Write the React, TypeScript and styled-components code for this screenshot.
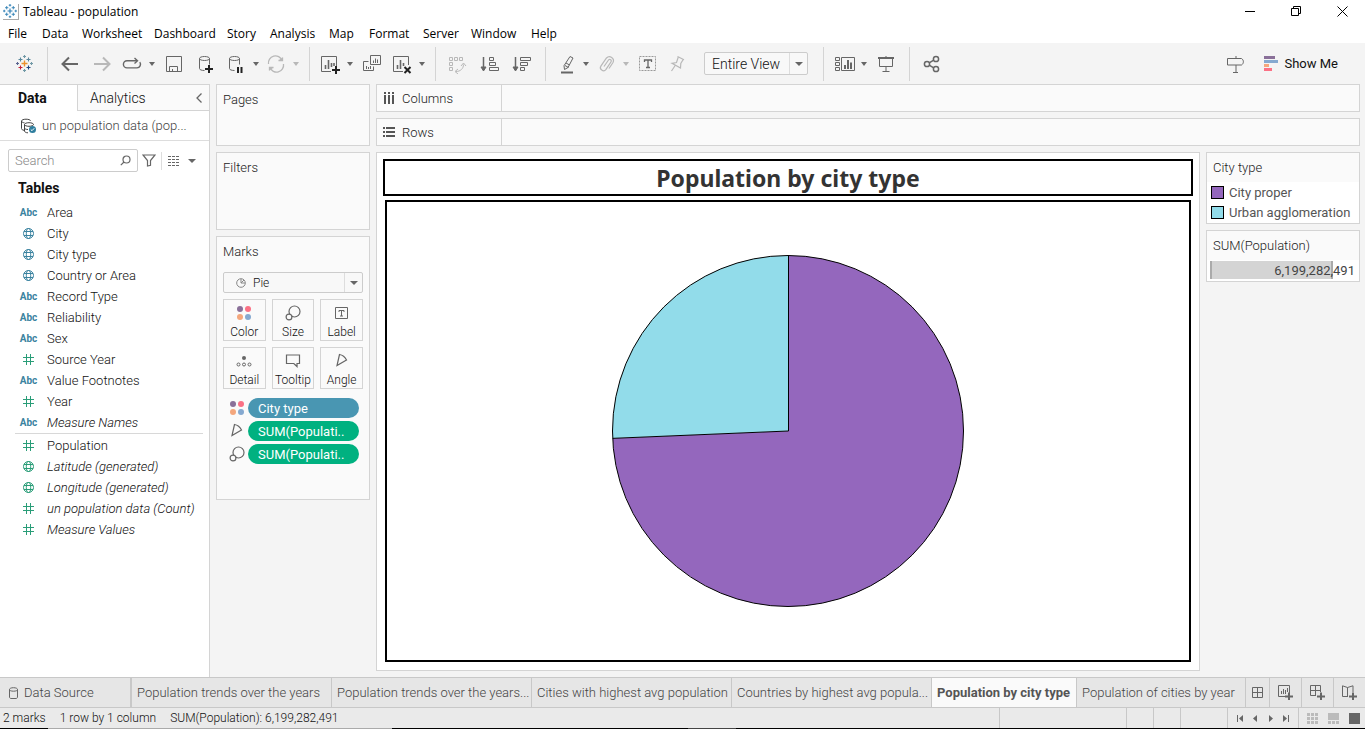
import React from "react";
import styled, { createGlobalStyle, css } from "styled-components";

const UI = `Roboto, "Liberation Sans", sans-serif`;
const SYSTEM = `"Open Sans", "Noto Sans", sans-serif`;

const line = "#d4d4d4";
const iconGrey = "#666";
const faded = "#b8b8b8";

const GlobalStyle = createGlobalStyle`
  *, *::before, *::after { box-sizing: border-box; }
  body { margin: 0; background: #f4f4f4; font-family: ${UI}; font-size: 13px; font-weight: 300; color: #111; }
  button, input, select { font: inherit; color: inherit; margin: 0; }
  button { background: none; border: 0; padding: 0; cursor: pointer; }
  h1, h2, ul, ol { margin: 0; padding: 0; font-size: inherit; font-weight: inherit; }
  ul, ol { list-style: none; }
  svg { display: block; flex: none; }
`;

/* ---------- page frame ---------- */

const Window = styled.div`
  display: flex;
  flex-direction: column;
  min-height: 100vh;
`;

const TitleBar = styled.header`
  display: flex;
  align-items: center;
  gap: 4px;
  height: 23px;
  padding-left: 3px;
  background: #fff;
  color: #000;
  font-family: ${SYSTEM};
  font-size: 12px;
  font-weight: 400;
`;

const AppBadge = styled.span`
  display: flex;
  padding: 0 1px 1px 0;
  border-right: 1px solid #aaa;
  border-bottom: 1px solid #aaa;
`;

const WindowButtons = styled.div`
  display: flex;
  margin-left: auto;
`;

const WindowButton = styled.button`
  display: flex;
  align-items: center;
  justify-content: center;
  width: 46px;
  height: 22px;
`;

const MenuBar = styled.nav`
  display: grid;
  grid-template-columns: 34px 40px 72px 73px 43px 59px 40px 54px 48px 60px 40px;
  height: 20px;
  padding-left: 8px;
  background: #fff;
  color: #000;
  font-family: ${SYSTEM};
  font-size: 12px;
  font-weight: 400;
`;

const MenuItem = styled.button`
  line-height: 22px;
  text-align: left;
`;

const Toolbar = styled.div`
  display: flex;
  align-items: center;
  height: 41px;
  padding: 0 27px 0 8px;
`;

const ToolButton = styled.button<{ $split?: boolean; $faded?: boolean }>`
  display: flex;
  align-items: center;
  justify-content: center;
  width: ${(p) => (p.$split ? 28 : 32)}px;
  height: 32px;
  color: ${(p) => (p.$faded ? faded : iconGrey)};
`;

const CaretButton = styled.button<{ $faded?: boolean }>`
  display: flex;
  align-items: center;
  justify-content: center;
  width: 12px;
  height: 32px;
  color: ${(p) => (p.$faded ? faded : iconGrey)};
`;

const ToolDivider = styled.span`
  width: 2px;
  height: 34px;
  margin: 0 6px;
  border-right: 1px solid ${line};
`;

const SelectFrame = styled.div<{ $wide?: boolean }>`
  position: relative;
  display: flex;
  align-items: center;
  border: 1px solid #ccc;
  border-radius: 2px;
  background: #f8f8f8;
  ${(p) =>
    p.$wide
      ? css`
          height: 21px;
          margin-bottom: 6px;
        `
      : css`
          width: 104px;
          height: 23px;
          margin: 0 8px;
          font-size: 14px;
        `}
`;

const SelectBox = styled.select<{ $indent: number }>`
  appearance: none;
  width: 100%;
  height: 100%;
  padding: 0 20px 0 ${(p) => p.$indent}px;
  border: 0;
  background: none;
  outline: 0;
`;

const SelectArrow = styled.span`
  position: absolute;
  right: 0;
  top: 0;
  bottom: 0;
  width: 18px;
  display: flex;
  align-items: center;
  justify-content: center;
  border-left: 1px solid #ddd;
  color: ${iconGrey};
  pointer-events: none;
`;

const SelectIcon = styled.span`
  position: absolute;
  left: 12px;
  pointer-events: none;
`;

const ToolbarEnd = styled.div`
  display: flex;
  align-items: center;
  gap: 12px;
  margin-left: auto;
`;

const ShowMe = styled.button`
  display: flex;
  align-items: center;
  gap: 5px;
  font-size: 13px;
  font-weight: 400;
`;

const Workspace = styled.div`
  flex: 1;
  display: grid;
  grid-template-columns: 210px 154px minmax(0, 1fr);
  column-gap: 6px;
  padding-right: 5px;
`;

/* ---------- data pane ---------- */

const DataPane = styled.aside`
  background: #fff;
  border: solid ${line};
  border-width: 1px 1px 0 0;
`;

const PaneTabs = styled.div`
  display: flex;
  height: 26px;
  font-size: 14px;
`;

const PaneTab = styled.button<{ $active?: boolean }>`
  text-align: left;
  ${(p) =>
    p.$active
      ? css`
          width: 77px;
          padding-left: 18px;
          font-weight: 700;
          color: #111;
        `
      : css`
          flex: 1;
          padding-left: 12px;
          background: #fafafa;
          border: solid ${line};
          border-width: 0 0 1px 1px;
        `}
`;

const CollapseButton = styled.button`
  display: flex;
  align-items: center;
  justify-content: center;
  width: 20px;
  background: #fafafa;
  border-bottom: 1px solid ${line};
  color: ${iconGrey};
`;

const DataSourceRow = styled.button`
  display: flex;
  align-items: center;
  gap: 5px;
  width: 100%;
  height: 30px;
  padding-left: 20px;
  border-bottom: 1px solid #ddd;
  color: #444;
`;

const SearchRow = styled.div`
  display: flex;
  align-items: center;
  gap: 4px;
  padding: 8px 11px 0 8px;
  color: ${iconGrey};
`;

const SearchBox = styled.label`
  display: flex;
  align-items: center;
  width: 130px;
  height: 23px;
  padding: 0 6px;
  border: 1px solid #ccc;
  border-radius: 2px;
`;

const SearchInput = styled.input`
  flex: 1;
  min-width: 0;
  padding: 0;
  border: 0;
  outline: 0;
  &::placeholder { color: #888; opacity: 1; }
`;

const PlainButton = styled.button`
  display: flex;
  align-items: center;
  gap: 8px;
  color: inherit;
`;

const SearchDivider = styled.span`
  height: 18px;
  margin: 0 2px 0 1px;
  border-left: 1px solid #ddd;
`;

const TablesTitle = styled.h2`
  padding: 6px 18px 4px;
  font-size: 14px;
  line-height: 20px;
  font-weight: 700;
  color: #111;
`;

const FieldList = styled.ul`
  margin: 0 6px 0 15px;
  & + & { padding-top: 1px; border-top: 1px solid #d8d8d8; }
`;

const FieldButton = styled.button<{ $italic?: boolean }>`
  display: flex;
  align-items: center;
  gap: 5px;
  width: 100%;
  height: 21px;
  font-style: ${(p) => (p.$italic ? "italic" : "normal")};
  white-space: nowrap;
`;

const FieldIcon = styled.span<{ $tone: string }>`
  display: flex;
  justify-content: center;
  width: 27px;
  font-size: 10px;
  font-weight: 700;
  font-style: normal;
  color: ${(p) => p.$tone};
`;

/* ---------- shelves and cards ---------- */

const CardColumn = styled.div`
  display: flex;
  flex-direction: column;
  gap: 6px;
`;

const Card = styled.section<{ $height: number }>`
  height: ${(p) => p.$height}px;
  padding: 5px 6px;
  border: 1px solid ${line};
  background: #fafafa;
`;

const CardTitle = styled.h2`
  line-height: 20px;
  color: #222;
`;

const MarksBody = styled.div`
  padding-top: 10px;
  font-size: 12px;
`;

const MarkGrid = styled.div`
  display: grid;
  grid-template-columns: repeat(3, 1fr);
  gap: 6px;
`;

const MarkButton = styled.button`
  display: flex;
  flex-direction: column;
  align-items: center;
  justify-content: space-between;
  height: 42px;
  padding-top: 5px;
  border: 1px solid ${line};
  line-height: 15px;
  svg { color: ${iconGrey}; }
`;

const PillList = styled.ul`
  display: grid;
  gap: 3px;
  padding: 9px 4px 0 5px;
  color: ${iconGrey};
`;

const PillRow = styled.li`
  display: flex;
  align-items: center;
  gap: 3px;
`;

const PillIcon = styled.span`
  display: flex;
  justify-content: center;
  width: 17px;
`;

const Pill = styled.button<{ $measure?: boolean }>`
  flex: 1;
  height: 20px;
  padding-left: 10px;
  border-radius: 10px;
  background: ${(p) => (p.$measure ? "#00b180" : "#4996b2")};
  color: #fff;
  font-weight: 400;
  font-size: 13px;
  text-align: left;
`;

const MainColumn = styled.main`
  display: flex;
  flex-direction: column;
  gap: 6px;
  padding-bottom: 6px;
`;

const Shelf = styled.div`
  display: flex;
  height: 28px;
  border: 1px solid ${line};
  background: #fafafa;
`;

const ShelfLabel = styled.div`
  display: flex;
  align-items: center;
  gap: 7px;
  width: 125px;
  padding-left: 6px;
  border-right: 1px solid ${line};
  color: #222;
  svg { color: #555; }
`;

const ViewRow = styled.div`
  flex: 1;
  display: grid;
  grid-template-columns: minmax(0, 1fr) 154px;
  gap: 6px;
`;

const View = styled.section`
  display: flex;
  flex-direction: column;
  padding: 6px;
  border: 1px solid ${line};
  background: #fff;
`;

const ViewTitle = styled.h1`
  height: 37px;
  border: 2px solid #000;
  font-family: "Noto Sans", "Open Sans", sans-serif;
  font-size: 23px;
  line-height: 34px;
  font-weight: 700;
  text-align: center;
  color: #333;
`;

const ChartFrame = styled.div`
  flex: 1;
  display: flex;
  align-items: center;
  justify-content: center;
  margin: 4px 2px 2px;
  border: 2px solid #000;
`;

const Legend = styled.section`
  border: 1px solid ${line};
  background: #fff;
`;

const LegendTitle = styled.h2`
  padding: 5px 6px 4px;
  line-height: 20px;
  background: #fafafa;
  color: #222;
`;

const LegendList = styled.ul`
  padding-bottom: 1px;
  font-weight: 400;
`;

const LegendItem = styled.li`
  display: flex;
  align-items: center;
  gap: 5px;
  height: 20px;
  padding-left: 4px;
  color: #555;
`;

const Swatch = styled.span<{ $color: string }>`
  width: 13px;
  height: 13px;
  border: 1px solid #000;
  background: ${(p) => p.$color};
`;

const SizeScale = styled.div`
  display: flex;
  align-items: center;
  justify-content: flex-end;
  height: 18px;
  margin: 1px 3px 2px;
  padding-right: 1px;
  background: linear-gradient(to right, #aaa 2px, #d4d4d4 2px 121px, #aaa 121px 123px, transparent 123px);
  color: #444;
  font-weight: 400;
`;

/* ---------- sheet tabs and status bar ---------- */

const SheetBar = styled.nav`
  display: flex;
  height: 31px;
  border: solid #c8c8c8;
  border-width: 1px 0;
  background: #e6e6e6;
  color: #444;
`;

const SheetTab = styled.button<{ $width: number; $active?: boolean; $thick?: boolean }>`
  display: flex;
  flex: none;
  align-items: center;
  gap: 6px;
  width: ${(p) => p.$width}px;
  padding-left: ${(p) => (p.$thick ? 9 : 5)}px;
  border-right: ${(p) => (p.$thick ? 2 : 1)}px solid #c8c8c8;
  white-space: nowrap;
  svg { color: ${iconGrey}; }
  ${(p) =>
    p.$active &&
    css`
      background: #fafafa;
      font-weight: 700;
      color: #555;
    `}
`;

const SheetAction = styled.button<{ $narrow?: boolean }>`
  display: flex;
  flex: none;
  align-items: center;
  justify-content: center;
  width: ${(p) => (p.$narrow ? 24 : 32)}px;
  border-right: 1px solid #c8c8c8;
  color: ${iconGrey};
  &:last-child { flex: 1; border-right: 0; }
`;

const StatusBar = styled.footer`
  display: flex;
  height: 20px;
  background: #eaeaea;
  font-size: 12px;
`;

const StatusTexts = styled.div`
  display: flex;
  align-items: center;
  gap: 14px;
  flex: 1;
  padding-left: 3px;
`;

const StatusCell = styled.div<{ $width: number }>`
  display: flex;
  align-items: center;
  justify-content: space-evenly;
  width: ${(p) => p.$width}px;
  border-left: 1px solid #c8c8c8;
  color: ${iconGrey};
`;

const ViewModes = styled.div`
  display: flex;
  align-items: center;
  gap: 10px;
  padding: 0 5px 0 8px;
  border-left: 1px solid #c8c8c8;
`;

const ScreenEdge = styled.div`
  height: 1px;
  background: linear-gradient(to right, #000 48px, #aaa 48px 392px, #000 392px 688px, #444 688px 736px, #000 736px);
`;

/* ---------- icons ---------- */

type Kids = { children: React.ReactNode };

const Icon = ({ w = 20, h = 20, sw = 1, children }: Kids & { w?: number; h?: number; sw?: number }) => (
  <svg width={w} height={h} viewBox={`0 0 ${w} ${h}`} fill="none" stroke="currentColor" strokeWidth={sw} aria-hidden="true">
    {children}
  </svg>
);

const cross = (x: number, y: number, r: number) => `M${x - r} ${y}h${2 * r}M${x} ${y - r}v${2 * r}`;

const Mark = ({ size, colors }: { size: number; colors: string[] }) => {
  const spots: [number, number, number][] = [
    [8.5, 8.5, 3], [4.5, 4.5, 2], [12.5, 4.5, 2], [4.5, 12.5, 2], [12.5, 12.5, 2],
    [8.5, 1.5, 1.5], [8.5, 15.5, 1.5], [1.5, 8.5, 1.5], [15.5, 8.5, 1.5],
  ];
  return (
    <svg width={size} height={size} viewBox="0 0 17 17" aria-hidden="true">
      {spots.map(([x, y, r], i) => (
        <path key={i} d={cross(x, y, r)} stroke={colors[i % colors.length]} strokeWidth={i < 1 ? 1.4 : 1.1} />
      ))}
    </svg>
  );
};

const Caret = () => (
  <svg width="6" height="4" viewBox="0 0 6 4" fill="currentColor" aria-hidden="true"><path d="M0 0h6L3 4z" /></svg>
);
const WideCaret = () => (
  <svg width="8" height="4" viewBox="0 0 8 4" fill="currentColor" aria-hidden="true"><path d="M0 0h8L4 4z" /></svg>
);

const BackIcon = () => <Icon sw={2}><path d="M2.500 10H18M9 3.500L2.500 10L9 16.500" /></Icon>;
const ForwardIcon = () => <Icon sw={2}><path d="M2 10H17.500M11 3.500L17.500 10L11 16.500" /></Icon>;
const RedoIcon = () => (
  <Icon sw={1.4}><path d="M15 6.700H5a3.600 3.600 0 0 0 0 7.200h10a3.600 3.600 0 0 0 2.800-5.700" /><path d="M12.500 4l3 2.700-3 2.700" /></Icon>
);
const SaveIcon = () => <Icon><path d="M2.500 2.500h15v15h-15zM5.500 17.500v-5h8v5M8.500 17v-2" /></Icon>;
const Cylinder = () => (
  <path d="M3.500 4.500c0-1.100 2-2 5-2s5 .9 5 2-2 2-5 2-5-.9-5-2zV14.500c0 1.200 2 2 5 2M13.500 4.500v6" />
);
const AddDataIcon = () => (
  <Icon><Cylinder /><path d="M9 15h8M13 11v8" stroke="#222" strokeWidth="2" /></Icon>
);
const PauseDataIcon = () => (
  <Icon><Cylinder /><path d="M12 13v6M15.500 13v6" stroke="#222" strokeWidth="2" /></Icon>
);
const RefreshIcon = () => (
  <Icon sw={1.3}>
    <path d="M2.500 10a7 7 0 0 1 13.500-3.500M17.500 10a7 7 0 0 1-13.500 3.500" />
    <path d="M12.500 6.500h4v-3M7.500 13.500h-4v3" fill="currentColor" />
  </Icon>
);
const NewSheetIcon = () => (
  <Icon><path d="M11 17.500H1.500v-15h15V12" /><path d="M5.500 15v-4M8.500 15V6M11.500 13V9M14 12v-3" strokeWidth="1.600" /><path d="M12 16h8M16 12v8" stroke="#222" strokeWidth="2" /></Icon>
);
const DuplicateIcon = () => (
  <Icon><path d="M8.500 1.500h10v9h-10zM6.500 7.500h-5v9h10v-4" /><path d="M11.500 9V6.500M13.500 9V4.500M15.500 9V5.500M4.500 15v-3M6.500 15v-2M8.500 15v-3" /></Icon>
);
const ClearIcon = () => (
  <Icon><path d="M11 17.500H1.500v-15h15V11" /><path d="M5.500 15v-4M8.500 15V6M11.500 12V9" strokeWidth="1.600" /><path d="M12.500 13l6 6M18.500 13l-6 6" stroke="#222" strokeWidth="2" /></Icon>
);
const SwapIcon = () => (
  <Icon>
    <path d="M1.500 3.500h3v3h-3zM6.500 3.500h3v3h-3zM11.500 3.500h3v3h-3zM1.500 8.500h3v3h-3zM1.500 13.500h3v3h-3z" />
    <path d="M8 17.500c4.500 0 7.500-3 7.500-7M13 12l2.500-3L18 12M10 15l-3 2.500L10 20" />
  </Icon>
);
const SortAscIcon = () => (
  <Icon><path d="M3.500 3v13" strokeWidth="1.500" /><path d="M1 13h5l-2.500 4z" fill="currentColor" /><path d="M9.500 3.500h4v3h-4zM9.500 8.500h6v3h-6zM9.500 13.500h9v3h-9z" /></Icon>
);
const SortDescIcon = () => (
  <Icon><path d="M3.500 3v13" strokeWidth="1.500" /><path d="M1 13h5l-2.500 4z" fill="currentColor" /><path d="M8.500 3.500h10v3h-10zM8.500 8.500h7v3h-7zM8.500 13.500h4v3h-4z" /></Icon>
);
const HighlightIcon = () => (
  <Icon w={18}><path d="M13 2.500l3 1.500-5 9.500-3.500 2-.5-3.800zM8 11.500l3.500 2M9 9l3.200 1.800" /><path d="M4 18.500h12" strokeWidth="2" /></Icon>
);
const ClipIcon = () => (
  <Icon sw={1.200}><path d="M8 12.500l4.500-6.500a1.500 1.500 0 0 1 2.500 1.800l-5 7.500a3 3 0 0 1-5-3.500l5.500-7.800a4 4 0 0 1 6.500 4.500L13 14.500" /></Icon>
);
const LabelIcon = () => (
  <Icon><rect x="1.500" y="2.500" width="16" height="14" strokeDasharray="2 1" stroke="#999" /><path d="M6.500 8V6h7v2M10 6v7.500M8 13.500h4" strokeWidth="1.300" /></Icon>
);
const PinIcon = () => (
  <Icon sw={1.200}><path d="M7.500 2.500l6.500 3.200M8.300 3l-1.800 5.500-4.500.8 8.500 4.800.3-4.700L13.200 5.500M5.200 11.500L1.500 17" /></Icon>
);
const CardsIcon = () => (
  <Icon w={24}><path d="M3.500 3.500h4v3h-4zM3.500 8.500h4v3h-4zM3.500 13.500h4v3h-4zM9.500 3.500h13v13h-13z" /><path d="M13 15v-4M16 15V6M19 15V8.500" strokeWidth="2" /></Icon>
);
const PresentIcon = () => (
  <Icon><path d="M2 4h16" strokeWidth="2" /><path d="M3.500 5v7.500h13V5M10 2v2M10 12.500v5M6.500 17.500h7" /></Icon>
);
const ShareIcon = () => (
  <Icon sw={1.500}><circle cx="5" cy="10" r="2.600" /><circle cx="14" cy="5" r="2.600" /><circle cx="14" cy="15" r="2.600" /><path d="M7.200 8.800l4.500-2.600M7.200 11.200l4.500 2.600" /></Icon>
);
const SignIcon = () => <Icon><path d="M1.500 4.500h14c2.500 1.500 2.500 5 0 6.500h-14zM10 2v2.500M10 11v7.500M7 18.500h5" /></Icon>;

const GlobeIcon = () => (
  <Icon w={11} h={11}><circle cx="5.500" cy="5.500" r="5" /><ellipse cx="5.500" cy="5.500" rx="2.200" ry="5" /><path d="M1 3.500h9M1 7.500h9" /></Icon>
);
const HashIcon = () => <Icon w={11} h={11}><path d="M3.500 0v11M7.500 0v11M0 3.500h11M0 7.500h11" /></Icon>;

const DatabaseIcon = () => (
  <Icon w={17} h={16}>
    <path d="M1.500 3c0-1 2-1.800 4.500-1.800s4.500.7 4.500 1.600M1.500 3v7.500c0 1 1 1.600 2.500 1.800M1.500 3c0 1 1.500 1.700 3 1.800M4.500 6.500c0-1 2-1.800 4.500-1.800s4.500.8 4.500 1.800-2 1.800-4.500 1.800S4.500 7.500 4.500 6.500zV13c0 1 1.500 1.800 3.500 1.800M4.500 10c0 .8 1.500 1.500 3.500 1.500" />
    <circle cx="12.500" cy="11.500" r="3.500" fill="#2e7e9e" stroke="none" />
    <path d="M10.800 11.500l1.200 1.200 2.200-2.400" stroke="#fff" />
  </Icon>
);
const MagnifierIcon = () => <Icon w={11} h={11} sw={1.200}><circle cx="6.500" cy="4.500" r="3.500" /><path d="M4 7L.8 10.200" /></Icon>;
const FunnelIcon = () => <Icon w={14} h={13} sw={1.200}><path d="M1 1h12L8.500 6.500v4.800L5.500 12V6.500z" /></Icon>;
const ListIcon = () => <Icon w={12} h={10}><path d="M0 .5h12M0 3.500h12M0 6.500h12M0 9.500h12" strokeDasharray="3 1" /></Icon>;

const DotsIcon = () => (
  <svg width="16" height="16" viewBox="0 0 16 16" aria-hidden="true">
    <circle cx="4" cy="4" r="3" fill="#8a7099" /><circle cx="12" cy="4" r="3" fill="#fb7185" />
    <circle cx="4" cy="12" r="3" fill="#f4a77d" /><circle cx="12" cy="12" r="3" fill="#85a9d0" />
  </svg>
);
const SizeIcon = () => <Icon w={16} h={16} sw={1.200}><circle cx="9.500" cy="6.500" r="5.500" /><circle cx="4" cy="12" r="2.900" fill="#fafafa" /></Icon>;
const TextIcon = () => <Icon w={14} h={16}><path d="M.5 2.500h12v11H.5z" /><path d="M4 7V5.500h5V7M6.500 5.500v5.500M5 11h3" /></Icon>;
const DetailIcon = () => (
  <Icon w={16} h={16}><circle cx="8" cy="5" r="2" fill="currentColor" stroke="none" /><circle cx="2.500" cy="11.500" r="1.500" /><circle cx="8" cy="11.500" r="1.500" /><circle cx="13.500" cy="11.500" r="1.500" /></Icon>
);
const TooltipIcon = () => <Icon w={16} h={16} sw={1.200}><path d="M1.500 2h13v8.500h-2.500v3L8.800 10.500H1.500z" /></Icon>;
const AngleIcon = () => <Icon w={14} h={16} sw={1.200}><path d="M4.500 1.500L2 12.500 11.500 7C10 4 7.500 2 4.500 1.500z" /></Icon>;
const PieIcon = () => <Icon w={10} h={10}><circle cx="5" cy="5" r="4.300" stroke="#888" /><path d="M5 1v4h4M5 5l3-3" stroke="#888" /></Icon>;

const ColumnsIcon = () => <Icon w={12} h={12} sw={2}><path d="M2 0v2M6 0v2M10 0v2M2 3v9M6 3v9M10 3v9" /></Icon>;
const RowsIcon = () => <Icon w={12} h={12} sw={2}><path d="M0 2h2M0 6h2M0 10h2M3 2h9M3 6h9M3 10h9" /></Icon>;

const TabDataIcon = () => <Icon w={9} h={12}><path d="M.5 2.500c0-1 1.500-1.800 4-1.800s4 .8 4 1.800-1.500 1.700-4 1.700-4-.7-4-1.700zV10c0 .8.6 1.500 1.500 1.500h5c.9 0 1.500-.7 1.500-1.500V2.500" /></Icon>;
const GridIcon = () => <Icon w={11} h={11}><path d="M.5.5h10v10H.5zM5.500 0v11M0 5.500h11" /></Icon>;
const AddSheetIcon = () => (
  <Icon w={16} h={15}><path d="M8 11.500H.5V.5h11V8M3.500 9V6M5.500 9V4M7.500 9V5M9.500 7V3" /><path d="M7 11.500h8M11 7.500v8" strokeWidth="2" /></Icon>
);
const AddDashboardIcon = () => (
  <Icon w={16} h={15}><path d="M6 10.500H.5V.5h10V7M5.500 0v11M0 5.500h11" /><path d="M7 11.500h8M11 7.500v8" strokeWidth="2" /></Icon>
);
const AddStoryIcon = () => (
  <Icon w={16} h={15}><path d="M6 11.500H.5V.8l5 1.700 5.500-1.700V7M5.500 2.500v9" /><path d="M7 11.500h8M11 7.500v8" strokeWidth="2" /></Icon>
);

const NavIcon = ({ d, bar }: { d: string; bar?: number }) => (
  <svg width="8" height="7" viewBox="0 0 8 7" fill="currentColor" aria-hidden="true">
    <path d={d} />
    {bar !== undefined && <rect x={bar} y="0" width="1" height="7" />}
  </svg>
);

const thumbs = [0, 4, 8];
const SorterIcon = () => (
  <svg width="11" height="11" fill="#bbb" aria-hidden="true">
    {thumbs.flatMap((y) => thumbs.map((x) => <rect key={`${x}-${y}`} x={x} y={y} width="3" height="3" />))}
  </svg>
);
const FilmstripIcon = () => (
  <svg width="11" height="11" fill="#bbb" aria-hidden="true">
    <rect width="11" height="7" />
    {thumbs.map((x) => <rect key={x} x={x} y="8" width="3" height="3" />)}
  </svg>
);

/* ---------- data ---------- */

const menus = ["File", "Data", "Worksheet", "Dashboard", "Story", "Analysis", "Map", "Format", "Server", "Window", "Help"];

type Kind = "text" | "geo" | "number";
type Field = { name: string; kind: Kind; measure?: boolean; generated?: boolean };

const dimensions: Field[] = [
  { name: "Area", kind: "text" },
  { name: "City", kind: "geo" },
  { name: "City type", kind: "geo" },
  { name: "Country or Area", kind: "geo" },
  { name: "Record Type", kind: "text" },
  { name: "Reliability", kind: "text" },
  { name: "Sex", kind: "text" },
  { name: "Source Year", kind: "number", measure: true },
  { name: "Value Footnotes", kind: "text" },
  { name: "Year", kind: "number", measure: true },
  { name: "Measure Names", kind: "text", generated: true },
];

const measures: Field[] = [
  { name: "Population", kind: "number", measure: true },
  { name: "Latitude (generated)", kind: "geo", measure: true, generated: true },
  { name: "Longitude (generated)", kind: "geo", measure: true, generated: true },
  { name: "un population data (Count)", kind: "number", measure: true, generated: true },
  { name: "Measure Values", kind: "number", measure: true, generated: true },
];

const marks = [
  { name: "Color", icon: <DotsIcon /> },
  { name: "Size", icon: <SizeIcon /> },
  { name: "Label", icon: <TextIcon /> },
  { name: "Detail", icon: <DetailIcon /> },
  { name: "Tooltip", icon: <TooltipIcon /> },
  { name: "Angle", icon: <AngleIcon /> },
];

const sheets = [
  { name: "Population trends over the years", width: 200 },
  { name: "Population trends over the years...", width: 200 },
  { name: "Cities with highest avg population", width: 200 },
  { name: "Countries by highest avg popula...", width: 200 },
  { name: "Population by city type", width: 145, active: true },
  { name: "Population of cities by year", width: 169 },
];

/* ---------- parts ---------- */

const Tool = ({ label, menu, off, children }: Kids & { label: string; menu?: boolean; off?: boolean }) => (
  <>
    <ToolButton aria-label={label} $split={menu} $faded={off}>{children}</ToolButton>
    {menu && <CaretButton aria-label={`${label} options`} $faded={off}><Caret /></CaretButton>}
  </>
);

const Fields = ({ items }: { items: Field[] }) => (
  <FieldList>
    {items.map((f) => (
      <li key={f.name}>
        <FieldButton $italic={f.generated}>
          <FieldIcon $tone={f.measure ? "#2a9d78" : "#3b83a0"}>
            {f.kind === "text" ? "Abc" : f.kind === "geo" ? <GlobeIcon /> : <HashIcon />}
          </FieldIcon>
          {f.name}
        </FieldButton>
      </li>
    ))}
  </FieldList>
);

const Pie = () => {
  const r = 175.5;
  const a = (267.6 * Math.PI) / 180;
  const x = r * Math.sin(a);
  const y = -r * Math.cos(a);
  return (
    <svg width="352" height="352" viewBox="-176 -176 352 352" role="img" aria-label="Population by city type">
      <path d={`M0 0V${-r}A${r} ${r} 0 1 1 ${x} ${y}Z`} fill="#9467bd" />
      <path d={`M0 0L${x} ${y}A${r} ${r} 0 0 1 0 ${-r}Z`} fill="#92dcea" />
      <path d={`M.5 ${-r}V0L${x} ${y}`} fill="none" stroke="#000" />
      <circle r={r} fill="none" stroke="#000" />
    </svg>
  );
};

export default function App() {
  return (
    <Window>
      <GlobalStyle />
      <TitleBar>
        <AppBadge><Mark size={14} colors={["#2f7fb5"]} /></AppBadge>
        Tableau - population
        <WindowButtons>
          <WindowButton aria-label="Minimize"><Icon w={11} h={11}><path d="M0 5.500h10" stroke="#000" /></Icon></WindowButton>
          <WindowButton aria-label="Restore"><Icon w={11} h={11}><path d="M.5 2.500h7v7h-7zM2.500 2.500v-2h7v7h-2" stroke="#000" /></Icon></WindowButton>
          <WindowButton aria-label="Close"><Icon w={11} h={11}><path d="M.5.5l10 10M10.500.5l-10 10" stroke="#000" /></Icon></WindowButton>
        </WindowButtons>
      </TitleBar>
      <MenuBar aria-label="Main menu">
        {menus.map((m) => <MenuItem key={m}>{m}</MenuItem>)}
      </MenuBar>

      <Toolbar>
        <Tool label="Start page">
          <Mark size={17} colors={["#eb912c", "#59879b", "#5b879b", "#c72035", "#1f447e", "#7199a6", "#7099a6", "#5b6591", "#7199a6"]} />
        </Tool>
        <ToolDivider />
        <Tool label="Undo"><BackIcon /></Tool>
        <Tool label="Redo" off><ForwardIcon /></Tool>
        <Tool label="Replay" menu><RedoIcon /></Tool>
        <Tool label="Save"><SaveIcon /></Tool>
        <Tool label="New data source"><AddDataIcon /></Tool>
        <Tool label="Pause auto updates" menu><PauseDataIcon /></Tool>
        <Tool label="Run update" menu off><RefreshIcon /></Tool>
        <ToolDivider />
        <Tool label="New worksheet" menu><NewSheetIcon /></Tool>
        <Tool label="Duplicate"><DuplicateIcon /></Tool>
        <Tool label="Clear sheet" menu><ClearIcon /></Tool>
        <ToolDivider />
        <Tool label="Swap rows and columns" off><SwapIcon /></Tool>
        <Tool label="Sort ascending"><SortAscIcon /></Tool>
        <Tool label="Sort descending"><SortDescIcon /></Tool>
        <ToolDivider />
        <Tool label="Highlight" menu><HighlightIcon /></Tool>
        <Tool label="Group members" menu off><ClipIcon /></Tool>
        <Tool label="Show mark labels"><LabelIcon /></Tool>
        <Tool label="Fix axes" off><PinIcon /></Tool>
        <SelectFrame>
          <SelectBox $indent={7} aria-label="Fit"><option>Entire View</option></SelectBox>
          <SelectArrow><WideCaret /></SelectArrow>
        </SelectFrame>
        <ToolDivider />
        <Tool label="Show or hide cards" menu><CardsIcon /></Tool>
        <Tool label="Presentation mode"><PresentIcon /></Tool>
        <ToolDivider />
        <Tool label="Share"><ShareIcon /></Tool>
        <ToolbarEnd>
          <ToolButton aria-label="Data guide"><SignIcon /></ToolButton>
          <ShowMe>
            <svg width="15" height="15" viewBox="0 0 15 15" aria-hidden="true">
              <path d="M0 0h11v3H0z" fill="#8a7099" /><path d="M0 4h14v3H0z" fill="#85a9d0" />
              <path d="M0 8h5v3H0z" fill="#f4a77d" /><path d="M0 12h8v3H0z" fill="#fb7185" />
            </svg>
            Show Me
          </ShowMe>
        </ToolbarEnd>
      </Toolbar>

      <Workspace>
        <DataPane>
          <PaneTabs>
            <PaneTab $active>Data</PaneTab>
            <PaneTab>Analytics</PaneTab>
            <CollapseButton aria-label="Collapse pane"><Icon w={6} h={10} sw={1.300}><path d="M5.500.5L1 5l4.500 4.500" /></Icon></CollapseButton>
          </PaneTabs>
          <DataSourceRow><DatabaseIcon />un population data (pop...</DataSourceRow>
          <SearchRow>
            <SearchBox>
              <SearchInput placeholder="Search" aria-label="Search fields" />
              <MagnifierIcon />
            </SearchBox>
            <PlainButton aria-label="Filter fields"><FunnelIcon /></PlainButton>
            <SearchDivider />
            <PlainButton aria-label="View options"><ListIcon /><WideCaret /></PlainButton>
          </SearchRow>
          <TablesTitle>Tables</TablesTitle>
          <Fields items={dimensions} />
          <Fields items={measures} />
        </DataPane>

        <CardColumn>
          <Card $height={62}><CardTitle>Pages</CardTitle></Card>
          <Card $height={78}><CardTitle>Filters</CardTitle></Card>
          <Card $height={264}>
            <CardTitle>Marks</CardTitle>
            <MarksBody>
              <SelectFrame $wide>
                <SelectIcon><PieIcon /></SelectIcon>
                <SelectBox $indent={29} aria-label="Mark type"><option>Pie</option></SelectBox>
                <SelectArrow><WideCaret /></SelectArrow>
              </SelectFrame>
              <MarkGrid>
                {marks.map((m) => <MarkButton key={m.name}>{m.icon}{m.name}</MarkButton>)}
              </MarkGrid>
              <PillList>
                <PillRow><PillIcon><DotsIcon /></PillIcon><Pill>City type</Pill></PillRow>
                <PillRow><PillIcon><AngleIcon /></PillIcon><Pill $measure>SUM(Populati..</Pill></PillRow>
                <PillRow><PillIcon><SizeIcon /></PillIcon><Pill $measure>SUM(Populati..</Pill></PillRow>
              </PillList>
            </MarksBody>
          </Card>
        </CardColumn>

        <MainColumn>
          <Shelf><ShelfLabel><ColumnsIcon />Columns</ShelfLabel></Shelf>
          <Shelf><ShelfLabel><RowsIcon />Rows</ShelfLabel></Shelf>
          <ViewRow>
            <View>
              <ViewTitle>Population by city type</ViewTitle>
              <ChartFrame><Pie /></ChartFrame>
            </View>
            <CardColumn>
              <Legend>
                <LegendTitle>City type</LegendTitle>
                <LegendList>
                  <LegendItem><Swatch $color="#9467bd" />City proper</LegendItem>
                  <LegendItem><Swatch $color="#92dcea" />Urban agglomeration</LegendItem>
                </LegendList>
              </Legend>
              <Legend>
                <LegendTitle>SUM(Population)</LegendTitle>
                <SizeScale>6,199,282,491</SizeScale>
              </Legend>
            </CardColumn>
          </ViewRow>
        </MainColumn>
      </Workspace>

      <SheetBar aria-label="Sheets">
        <SheetTab $width={132} $thick><TabDataIcon />Data Source</SheetTab>
        {sheets.map((s) => <SheetTab key={s.name} $width={s.width} $active={s.active}>{s.name}</SheetTab>)}
        <SheetAction $narrow aria-label="All sheets"><GridIcon /></SheetAction>
        <SheetAction aria-label="New worksheet"><AddSheetIcon /></SheetAction>
        <SheetAction aria-label="New dashboard"><AddDashboardIcon /></SheetAction>
        <SheetAction aria-label="New story"><AddStoryIcon /></SheetAction>
      </SheetBar>
      <StatusBar>
        <StatusTexts>
          <span>2 marks</span>
          <span>1 row by 1 column</span>
          <span>SUM(Population): 6,199,282,491</span>
        </StatusTexts>
        <StatusCell $width={127} />
        <StatusCell $width={27} />
        <StatusCell $width={27} />
        <StatusCell $width={47} />
        <StatusCell $width={71}>
          <PlainButton aria-label="First sheet"><NavIcon d="M7 0v7L3 3.500z" bar={1} /></PlainButton>
          <PlainButton aria-label="Previous sheet"><NavIcon d="M6 0v7L2 3.500z" /></PlainButton>
          <PlainButton aria-label="Next sheet"><NavIcon d="M2 0v7l4-3.500z" /></PlainButton>
          <PlainButton aria-label="Last sheet"><NavIcon d="M1 0v7l4-3.500z" bar={6} /></PlainButton>
        </StatusCell>
        <ViewModes>
          <PlainButton aria-label="Sheet sorter"><SorterIcon /></PlainButton>
          <PlainButton aria-label="Filmstrip"><FilmstripIcon /></PlainButton>
          <PlainButton aria-label="Tabs"><svg width="11" height="11" fill="#666"><rect width="11" height="11" /></svg></PlainButton>
        </ViewModes>
      </StatusBar>
      <ScreenEdge />
    </Window>
  );
}
